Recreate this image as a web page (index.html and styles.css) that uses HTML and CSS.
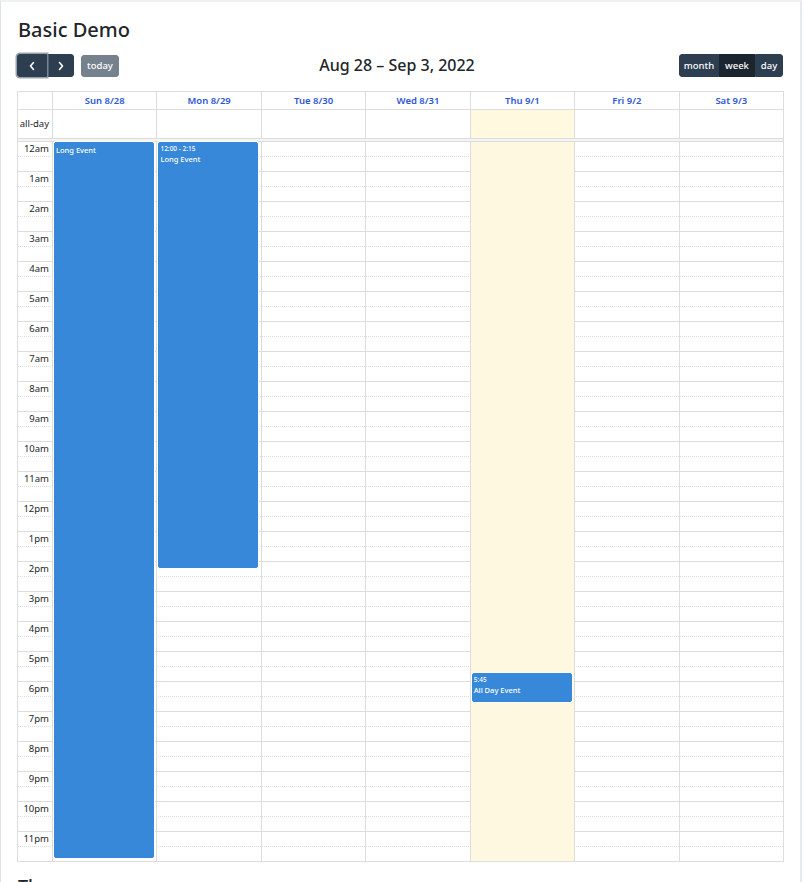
FILE: index.html
```html
<!DOCTYPE html>
<html lang="en">
<head>
<meta charset="utf-8">
<title>Basic Demo</title>
<link rel="stylesheet" href="styles.css">
</head>
<body>
<div class="frame">
  <h2 class="title">Basic Demo</h2>
  <div class="toolbar">
    <div class="tb-left">
      <div class="btn-group">
        <button class="btn nav focus" aria-label="prev"><svg width="8" height="10" viewBox="0 0 8 10"><path d="M5.5 1.5 L2.5 5 L5.5 8.5" fill="none" stroke="#fff" stroke-width="1.6" stroke-linecap="round" stroke-linejoin="round"/></svg></button>
        <button class="btn nav" aria-label="next"><svg width="8" height="10" viewBox="0 0 8 10"><path d="M2.5 1.5 L5.5 5 L2.5 8.5" fill="none" stroke="#fff" stroke-width="1.6" stroke-linecap="round" stroke-linejoin="round"/></svg></button>
      </div>
      <button class="btn today">today</button>
    </div>
    <h3 class="range">Aug 28 – Sep 3, 2022</h3>
    <div class="btn-group">
      <button class="btn w-month">month</button>
      <button class="btn w-week active">week</button>
      <button class="btn w-day">day</button>
    </div>
  </div>

  <div class="cal">
    <div class="grid-row head">
      <div class="axis"></div>
      <div class="cell">Sun 8/28</div>
      <div class="cell">Mon 8/29</div>
      <div class="cell">Tue 8/30</div>
      <div class="cell">Wed 8/31</div>
      <div class="cell">Thu 9/1</div>
      <div class="cell">Fri 9/2</div>
      <div class="cell">Sat 9/3</div>
    </div>
    <div class="grid-row allday">
      <div class="axis">all-day</div>
      <div class="cell"></div>
      <div class="cell"></div>
      <div class="cell"></div>
      <div class="cell"></div>
      <div class="cell is-today"></div>
      <div class="cell"></div>
      <div class="cell"></div>
    </div>
    <div class="divider"></div>
    <div class="body">
      <div class="slots">
        <div class="slot half"><span class="lbl">12am</span></div><div class="slot full"></div>
        <div class="slot half"><span class="lbl">1am</span></div><div class="slot full"></div>
        <div class="slot half"><span class="lbl">2am</span></div><div class="slot full"></div>
        <div class="slot half"><span class="lbl">3am</span></div><div class="slot full"></div>
        <div class="slot half"><span class="lbl">4am</span></div><div class="slot full"></div>
        <div class="slot half"><span class="lbl">5am</span></div><div class="slot full"></div>
        <div class="slot half"><span class="lbl">6am</span></div><div class="slot full"></div>
        <div class="slot half"><span class="lbl">7am</span></div><div class="slot full"></div>
        <div class="slot half"><span class="lbl">8am</span></div><div class="slot full"></div>
        <div class="slot half"><span class="lbl">9am</span></div><div class="slot full"></div>
        <div class="slot half"><span class="lbl">10am</span></div><div class="slot full"></div>
        <div class="slot half"><span class="lbl">11am</span></div><div class="slot full"></div>
        <div class="slot half"><span class="lbl">12pm</span></div><div class="slot full"></div>
        <div class="slot half"><span class="lbl">1pm</span></div><div class="slot full"></div>
        <div class="slot half"><span class="lbl">2pm</span></div><div class="slot full"></div>
        <div class="slot half"><span class="lbl">3pm</span></div><div class="slot full"></div>
        <div class="slot half"><span class="lbl">4pm</span></div><div class="slot full"></div>
        <div class="slot half"><span class="lbl">5pm</span></div><div class="slot full"></div>
        <div class="slot half"><span class="lbl">6pm</span></div><div class="slot full"></div>
        <div class="slot half"><span class="lbl">7pm</span></div><div class="slot full"></div>
        <div class="slot half"><span class="lbl">8pm</span></div><div class="slot full"></div>
        <div class="slot half"><span class="lbl">9pm</span></div><div class="slot full"></div>
        <div class="slot half"><span class="lbl">10pm</span></div><div class="slot full"></div>
        <div class="slot half"><span class="lbl">11pm</span></div><div class="slot full last"></div>
      </div>
      <div class="cols">
        <div class="col-axis"></div>
        <div class="col">
          <a class="event" style="top:0px;height:716px"><span class="ev-title">Long Event</span></a>
        </div>
        <div class="col">
          <a class="event" style="top:0px;height:426px"><span class="ev-time">12:00 - 2:15</span><span class="ev-title">Long Event</span></a>
        </div>
        <div class="col"></div>
        <div class="col"></div>
        <div class="col is-today">
          <a class="event" style="top:531px;height:29px"><span class="ev-time">5:45</span><span class="ev-title">All Day Event</span></a>
        </div>
        <div class="col"></div>
        <div class="col"></div>
      </div>
    </div>
  </div>

  <h2 class="next">Themes</h2>
</div>
</body>
</html>
```

FILE: styles.css
```css
* { box-sizing: border-box; }

html, body {
  margin: 0;
  padding: 0;
  background: #fff;
  overflow: hidden;
}

body {
  font-family: "Noto Sans", "Open Sans", "DejaVu Sans", sans-serif;
  color: #212529;
}

.frame {
  width: 802px;
  height: 882px;
  border-left: 1px solid #dfe2e7;
  border-right: 2px solid #e8e8f0;
  border-top: 2px solid #f0f1f3;
  padding: 13px 17px 0 16px;
  overflow: hidden;
}

.title {
  margin: 0 0 0 1px;
  font-size: 20px;
  line-height: 30px;
  font-weight: 500;
  color: #212529;
}

.toolbar {
  display: flex;
  align-items: center;
  justify-content: space-between;
  margin-top: 9px;
  height: 23px;
}

.tb-left {
  display: flex;
  align-items: center;
  gap: 7px;
}

.btn-group {
  display: flex;
}

.btn {
  font-family: inherit;
  font-size: 9.5px;
  font-weight: 500;
  line-height: 13px;
  color: #fff;
  background: #2c3e50;
  border: 1px solid #2c3e50;
  padding: 0;
  height: 23px;
  border-radius: 0;
  cursor: pointer;
  display: flex;
  align-items: center;
  justify-content: center;
}

.btn-group .btn:first-child { border-radius: 3px 0 0 3px; }
.btn-group .btn:last-child { border-radius: 0 3px 3px 0; }

.btn.nav {
  width: 30px;
}
.btn.nav + .btn.nav { width: 27px; }

.btn.focus {
  box-shadow: 0 0 0 1.5px rgba(136, 146, 156, 0.85);
  position: relative;
  z-index: 1;
}

.btn.today {
  opacity: 0.65;
  border-radius: 3px;
  height: 22px;
  width: 38px;
}

.w-month { width: 40px; }
.w-week { width: 36px; }
.w-day { width: 28px; }

.btn.active {
  background: #1a252f;
  border-color: #1a252f;
}

.range {
  margin: 0 4px 0 0;
  font-size: 16px;
  font-weight: 500;
  line-height: 23px;
  color: #212529;
}

.cal {
  margin-top: 14px;
  border: 1px solid #ddd;
  width: 767px;
}

.grid-row {
  display: grid;
  grid-template-columns: 34px repeat(7, 1fr);
  border-bottom: 1px solid #ddd;
}

.grid-row .cell {
  border-left: 1px solid #ddd;
}

.head {
  height: 18px;
}

.head .cell {
  text-align: center;
  font-size: 9.5px;
  font-weight: 600;
  line-height: 17px;
  color: #2b56d6;
}

.allday {
  height: 29px;
}

.allday .axis {
  font-size: 9.5px;
  line-height: 28px;
  text-align: right;
  padding-right: 3px;
  color: #212529;
}

.is-today {
  background: rgba(255, 220, 40, 0.15);
}

.divider {
  height: 3px;
  background: #f4f4f4;
  border-bottom: 1px solid #ddd;
}

.body {
  position: relative;
}

.slot {
  height: 15px;
  position: relative;
}

.slot.half { border-bottom: 1px dotted #ddd; }
.slot.full { border-bottom: 1px solid #ddd; }
.slot.full.last { border-bottom: 0; height: 14px; }

.lbl {
  display: block;
  width: 34px;
  text-align: right;
  padding-right: 3px;
  font-size: 9.5px;
  line-height: 14px;
  color: #212529;
}

.cols {
  position: absolute;
  inset: 0;
  display: grid;
  grid-template-columns: 34px repeat(7, 1fr);
}

.col {
  position: relative;
  border-left: 1px solid #ddd;
}

.col.is-today {
  background: #fef8e0;
}

.event {
  position: absolute;
  left: 1px;
  right: 2.5%;
  background: #3788d8;
  border: 1px solid #3788d8;
  border-radius: 2px;
  color: #fff;
  padding: 1px 1px;
  display: flex;
  flex-direction: column;
  overflow: hidden;
  box-shadow: 0 0 0 1px #fff;
}

.ev-time {
  font-size: 6.5px;
  line-height: 10px;
  font-weight: 500;
}

.ev-title {
  font-size: 7.5px;
  line-height: 11px;
  font-weight: 500;
}

.event .ev-title:first-child {
  margin-top: 1px;
}

.next {
  margin: 12px 0 0 1px;
  font-size: 18px;
  line-height: 24px;
  font-weight: 500;
}
```
